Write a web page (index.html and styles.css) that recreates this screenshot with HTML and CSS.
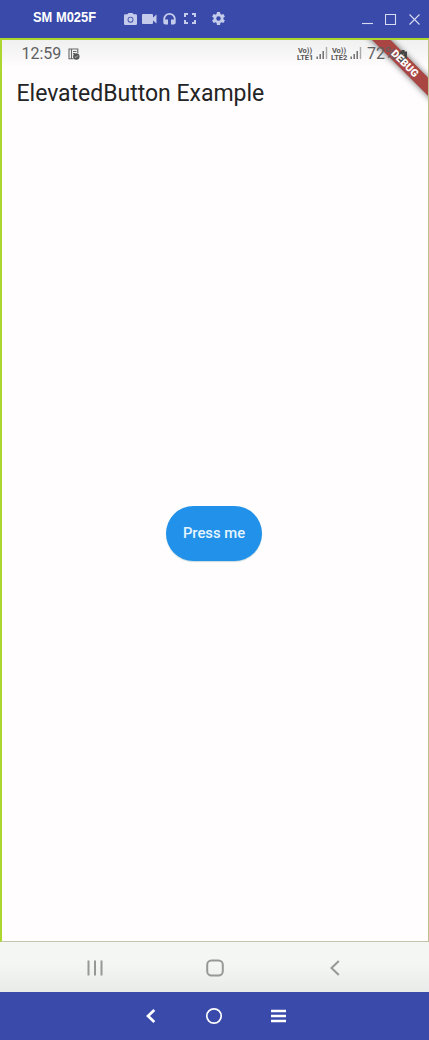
FILE: index.html
```html
<!DOCTYPE html>
<html lang="en">
<head>
<meta charset="utf-8">
<title>SM M025F</title>
<link rel="stylesheet" href="styles.css">
</head>
<body>
<div class="window">
  <header class="titlebar">
    <span class="device"><svg class="device-text" width="72" height="20"><text x="0" y="13" textLength="63" lengthAdjust="spacingAndGlyphs">SM M025F</text></svg></span>
    <div class="tools">
      <svg class="camera" width="13" height="12" viewBox="2 2 20 18" preserveAspectRatio="none"><path fill-rule="evenodd" d="M9 2 7.200 4H4a2 2 0 0 0-2 2v12a2 2 0 0 0 2 2h16a2 2 0 0 0 2-2V6a2 2 0 0 0-2-2h-3.200L15 2zM12 7.500a4.500 4.500 0 1 1 0 9a4.500 4.500 0 0 1 0-9z"/><circle cx="12" cy="12" r="3.200"/></svg>
      <svg class="video" width="15" height="10" viewBox="0 0 15 10"><path d="M1 0h9q1 0 1 1v2.500L14.500 .5v9L11 6.500V9q0 1-1 1H1Q0 10 0 9V1q0-1 1-1z"/></svg>
      <svg class="phones" width="13" height="12" viewBox="0 0 13 12"><path d="M6.500 0A6.200 6.200 0 0 0 .3 6.200v3.300Q.3 11.500 2.300 11.500H5V6.500H2.100v-.3a4.400 4.400 0 0 1 8.800 0v.3H8v5h2.700q2 0 2-2V6.200A6.200 6.200 0 0 0 6.500 0z"/></svg>
      <svg class="full" width="12" height="11" viewBox="0 0 12 11"><path d="M1 4V1h3M8 1h3v3M11 7v3H8M4 10H1V7" class="thick"/></svg>
      <svg class="gear" width="13" height="13" viewBox="2 2 20 20"><path d="M19.430 12.980c.04-.32.070-.64.070-.98s-.03-.66-.07-.98l2.110-1.650c.19-.15.240-.42.120-.64l-2-3.460c-.12-.22-.39-.3-.61-.22l-2.490 1c-.52-.4-1.080-.73-1.690-.98l-.38-2.650C14.460 2.180 14.250 2 14 2h-4c-.25 0-.46.180-.49.420l-.38 2.650c-.61.250-1.170.59-1.690.98l-2.490-1c-.23-.09-.49 0-.61.220l-2 3.460c-.13.220-.07.490.12.640l2.110 1.650c-.04.320-.07.650-.07.980s.03.660.070.980l-2.110 1.650c-.19.150-.24.420-.12.640l2 3.460c.12.220.39.300.61.220l2.490-1c.52.400 1.080.730 1.690.980l.38 2.650c.03.240.240.420.490.420h4c.25 0 .46-.18.490-.42l.38-2.650c.61-.25 1.170-.59 1.690-.98l2.490 1c.23.090.49 0 .61-.22l2-3.460c.12-.22.070-.49-.12-.64zM12 15.500a3.500 3.500 0 1 1 0-7a3.500 3.500 0 0 1 0 7z"/></svg>
    </div>
    <div class="controls">
      <svg width="11" height="12" viewBox="0 0 11 12"><path d="M0 10.500h11"/></svg>
      <svg width="12" height="12" viewBox="0 0 12 12"><path d="M.5 1.500h10v10H.5z"/></svg>
      <svg width="11" height="12" viewBox="0 0 11 12"><path d="M.5 1.500l10 10M10.500 1.500l-10 10"/></svg>
    </div>
  </header>

  <main class="screen">
    <div class="ribbon-clip"><div class="ribbon"></div></div>
    <div class="status">
      <span class="clock">12:59</span>
      <svg class="note" width="12" height="12" viewBox="0 0 12 12"><path d="M5.500 10.800H1V1h8.800v4M3.500 1v9.500M5 3.500h3.500M5 5.500h2" fill="none" stroke="#666" stroke-width="1.100"/><circle cx="8.300" cy="8.500" r="3.200" fill="#555"/><path d="M6.800 8.500l1.200 1.100 2-2.200" fill="none" stroke="#ddd" stroke-width=".7"/></svg>
      <div class="radio">
        <span class="lte"><b>Vo))</b><b>LTE1</b></span>
        <svg class="signal" width="12" height="12" viewBox="0 0 12 12"><path d="M1.200 9.500v2.500M4.200 7v5M7.200 4v8"/><path d="M10.500 0v12" stroke="#aaa"/></svg>
        <span class="lte"><b>Vo))</b><b>LTE2</b></span>
        <svg class="signal" width="12" height="12" viewBox="0 0 12 12"><path d="M1.200 9.500v2.500M4.200 7v5M7.200 4v8"/><path d="M10.500 0v12" stroke="#aaa"/></svg>
      </div>
      <span class="level">72%</span>
      <svg class="battery" width="8" height="12" viewBox="0 0 8 12"><path d="M2.500 0h3v1.500H8V12H0V1.500h2.500z" fill="#444"/><path d="M4.700 3 2 7h1.800L3.400 10.500 6 6H4.300z" fill="#999"/></svg>
    </div>
    <h1 class="heading">ElevatedButton Example</h1>
    <div class="content"><button class="press">Press me</button></div>
    <div class="ribbon-clip"><div class="ribbon-label">DEBUG</div></div>
  </main>

  <nav class="softkeys">
    <svg width="16" height="16" viewBox="0 0 16 16"><path d="M1.500 .5v15M8 .5v15M14.500 .5v15"/></svg>
    <svg class="home" width="18" height="18" viewBox="0 0 18 18"><rect x="1.200" y="1.500" width="15.600" height="15" rx="4.200"/></svg>
    <svg width="10" height="16" viewBox="0 0 10 16"><path d="M8.800 1 1.500 8l7.300 7"/></svg>
  </nav>
  <footer class="toolbar">
    <svg width="10" height="14" viewBox="0 0 10 14"><path d="M8.300 1 2 7l6.300 6" stroke-width="2.700"/></svg>
    <svg class="circle" width="18" height="18" viewBox="0 0 18 18"><circle cx="9" cy="9" r="7.200" stroke-width="1.700"/></svg>
    <svg width="15" height="14" viewBox="0 0 15 14"><path d="M0 2h15M0 7h15M0 12h15" stroke-width="2.500"/></svg>
  </footer>
</div>
</body>
</html>
```
FILE: styles.css
```css
* { box-sizing: border-box; }
body { margin: 0; font-family: Roboto, "Liberation Sans", sans-serif; }
svg { display: block; flex: none; }
.window { width: 429px; height: 1040px; display: flex; flex-direction: column; overflow: hidden; }
.titlebar { height: 38px; flex: none; background: #394aab; display: flex; padding: 0 9px 0 33px; }
.device { width: 91px; padding-top: 9px; }
.device-text { overflow: visible; font: bold 14px "Liberation Sans", sans-serif; fill: #fff; }
.tools { display: flex; align-items: flex-start; padding-top: 13px; fill: #c5cceb; }
.video { margin: 1px 0 0 5px; }
.phones { margin-left: 6px; }
.full { margin-left: 8px; }
.gear { margin: -1px 0 0 16px; }
.thick { fill: none; stroke: #c5cceb; stroke-width: 2; }
.controls { display: flex; gap: 12px; margin-left: auto; padding-top: 13px; fill: none; stroke: #d8dcf2; stroke-width: 1.100; }

.screen { position: relative; height: 904px; flex: none; display: flex; flex-direction: column; border: 2px solid #acd72e; border-right: 1px solid #bdc18f; border-bottom: 1px solid #c4c4ab; background: linear-gradient(#f0f0f0, #fffdfe 28px); }
.status { position: relative; display: flex; align-items: flex-start; height: 32px; padding: 4px 0 0 19.500px; color: #606060; font-size: 16px; line-height: 19px; }
.clock { width: 46.500px; }
.note { margin-top: 4px; }
.radio { display: flex; gap: 3px; margin: 3px 0 0 217px; }
.lte { display: flex; flex-direction: column; width: 16px; font-size: 7.500px; line-height: 7px; text-align: center; color: #555; }
.lte b { white-space: nowrap; }
.signal { margin-top: 0; fill: none; stroke: #666; stroke-width: 1.400; }
.level { margin-left: 5px; width: 32px; }
.battery { margin: 6px 0 0 0; }
.heading { margin: 9px 0 0 14.500px; font-size: 23px; line-height: 28px; font-weight: 400; color: #242424; white-space: nowrap; letter-spacing: -.02px; }
.content { height: 850px; display: flex; justify-content: center; padding: 398px 2px 0 0; }
.press { width: 96px; height: 55px; padding: 0; border: 0; border-radius: 28px; background: #2191e9; color: #e5f5ff; font: 500 14.800px Roboto, sans-serif; box-shadow: 0 1px 1px #c9dcdf; }
.ribbon-clip { position: absolute; inset: 0 0 auto auto; width: 80px; height: 80px; overflow: hidden; }
.ribbon, .ribbon-label { position: absolute; left: 7px; top: 17px; width: 100px; height: 12.500px; transform: rotate(45deg); }
.ribbon { background: #a94644; box-shadow: 0 0 6px #0009; }
.ribbon-label { color: #fff; font-size: 10.500px; line-height: 13px; font-weight: 900; text-align: center; }

.softkeys { height: 50px; flex: none; display: flex; align-items: center; padding: 2px 89px 0 87px; justify-content: space-between; background: linear-gradient(#f4f6f3 45%, #e9ebea); fill: none; stroke: #969896; stroke-width: 2; }
.home { margin-right: 3px; }
.toolbar { height: 48px; flex: none; display: flex; align-items: center; justify-content: space-between; padding: 0 143px 0 146px; background: #394aab; fill: none; stroke: #fff; }
.circle { margin-left: 1px; }
```
